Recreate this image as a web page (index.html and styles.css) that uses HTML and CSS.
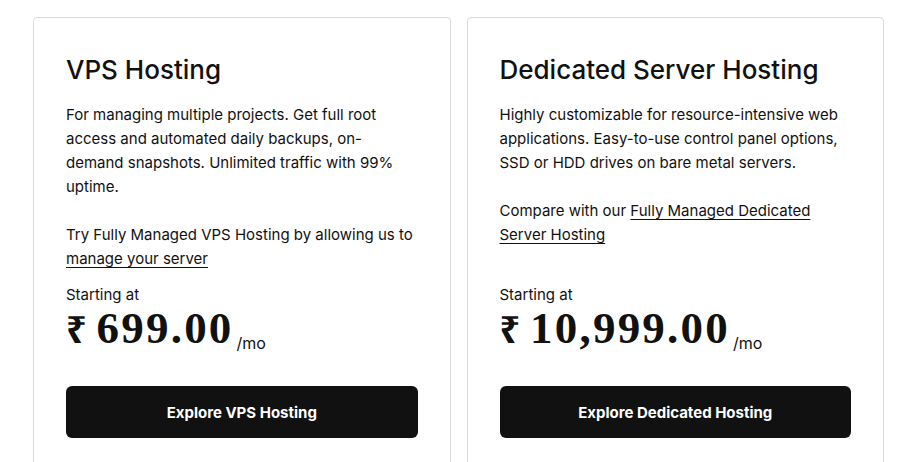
FILE: index.html
```html
<!DOCTYPE html>
<html lang="en">
<head>
<meta charset="utf-8">
<title>Hosting plans</title>
<link rel="stylesheet" href="styles.css">
</head>
<body>
<div class="plans">
  <section class="card">
    <div class="card-body">
      <h2 class="card-title">VPS Hosting</h2>
      <p class="card-text">For managing multiple projects. Get full root access and automated daily backups, on-demand snapshots. Unlimited traffic with 99% uptime.</p>
      <p class="card-text">Try Fully Managed VPS Hosting by allowing us to <a class="link" href="#">manage your server</a></p>
    </div>
    <div class="pricing">
      <div class="starting">Starting at</div>
      <div class="price-row"><span class="price"><span class="rupee">₹</span>699.00</span><span class="per">/mo</span></div>
    </div>
    <a class="btn" href="#">Explore VPS Hosting</a>
  </section>
  <section class="card">
    <div class="card-body">
      <h2 class="card-title">Dedicated Server Hosting</h2>
      <p class="card-text">Highly customizable for resource-intensive web applications. Easy-to-use control panel options, SSD or HDD drives on bare metal servers.</p>
      <p class="card-text">Compare with our <a class="link" href="#">Fully Managed Dedicated Server Hosting</a></p>
    </div>
    <div class="pricing">
      <div class="starting">Starting at</div>
      <div class="price-row"><span class="price"><span class="rupee">₹</span>10,999.00</span><span class="per">/mo</span></div>
    </div>
    <a class="btn" href="#">Explore Dedicated Hosting</a>
  </section>
</div>
</body>
</html>
```
FILE: styles.css
```css
* { box-sizing: border-box; }
html, body { margin: 0; background: #fff; }
body {
  font-family: Inter, "Noto Sans", sans-serif;
  color: #111;
  overflow: hidden;
}
.plans {
  display: grid;
  grid-template-columns: 1fr 1fr;
  gap: 16px;
  width: 884px;
  padding: 17px 0 0 33px;
}
.card {
  border: 1px solid #d6dbe0;
  border-radius: 4px;
  padding: 36px 32px 32px;
  display: flex;
  flex-direction: column;
}
.card-body { flex: 1; }
.card-title {
  margin: 0 0 17px;
  font-size: 26px;
  line-height: 32px;
  font-weight: 500;
}
.card-text {
  margin: 0 0 24px;
  font-size: 15px;
  line-height: 24px;
}
.card-text:last-child { margin-bottom: 12px; }
.link { color: #111; text-decoration: underline; text-underline-offset: 3px; }
.starting { font-size: 15px; line-height: 24px; }
.price-row { display: flex; align-items: baseline; margin-top: -3px; }
.price {
  font-family: "Liberation Serif", serif;
  font-weight: 700;
  font-size: 45px;
  line-height: 48px;
  letter-spacing: 2.2px;
}
.rupee {
  font-family: "Noto Sans", sans-serif;
  font-weight: 700;
  font-size: 36px;
  letter-spacing: 0;
  margin-right: 10px;
}
.per { font-size: 16px; position: relative; top: 6px; margin-left: 3px; }
.btn {
  margin-top: 32px;
  display: flex;
  align-items: center;
  justify-content: center;
  height: 52px;
  background: #111;
  color: #fff;
  border-radius: 6px;
  font-size: 15px;
  font-weight: 700;
  text-decoration: none;
}
```
